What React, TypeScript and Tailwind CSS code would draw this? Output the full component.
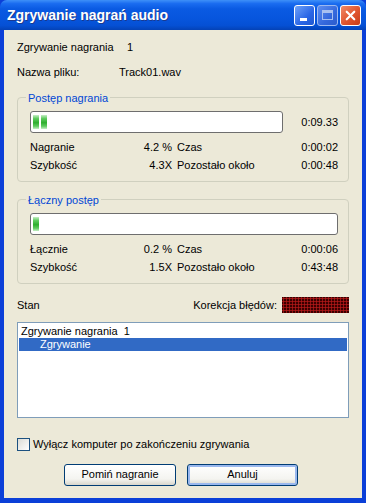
import { X } from "lucide-react";

const Chunk = () => (
  <div className="h-full w-[6px] bg-[linear-gradient(to_bottom,#c6eec6_0%,#5fcb5f_25%,#2eae2e_55%,#5fcb5f_80%,#c6eec6_100%)]" />
);

const Progress = ({ chunks, className }: { chunks: number; className: string }) => (
  <div
    className={`flex h-[22px] gap-[2px] rounded-[3px] border border-[#6e6e6e] bg-white px-[2px] py-[3px] ${className}`}
  >
    {Array.from({ length: chunks }).map((_, i) => (
      <Chunk key={i} />
    ))}
  </div>
);

const StatRow = ({ a, b, c, d }: { a: string; b: string; c: string; d: string }) => (
  <div className="flex h-[18px] items-center">
    <span className="w-[100px]">{a}</span>
    <span className="w-[42px] text-right">{b}</span>
    <span className="ml-[5px] flex-1">{c}</span>
    <span>{d}</span>
  </div>
);

const GroupBox = ({ title, children }: { title: string; children: React.ReactNode }) => (
  <div className="relative rounded-[4px] border border-[#d0d0bf] pb-[7px] pl-[12px] pr-[10px] pt-[13px]">
    <span className="absolute -top-[8px] left-[8px] bg-[#ece9d8] px-[2px] text-[#0046d5]">{title}</span>
    {children}
  </div>
);

export default function App() {
  return (
    <div className="flex h-[503px] w-[366px] flex-col bg-[#0b3fd8] font-['Liberation_Sans',Arial,sans-serif] text-[11px] text-black">
      {/* title bar */}
      <div className="flex h-[30px] shrink-0 items-center rounded-t-[7px] bg-[linear-gradient(to_bottom,#3e90f8_0%,#1a6cf0_12%,#0a5ae2_30%,#0756de_60%,#0550d4_85%,#0442b6_100%)] pl-[7px] pr-[5px]">
        <span className="flex-1 text-[14px] font-bold text-white [text-shadow:1px_1px_0_#1a3a90]">
          Zgrywanie nagrań audio
        </span>
        <div className="flex gap-[2px]">
          <div className="flex h-[21px] w-[21px] items-end justify-start rounded-[3px] border border-white bg-[linear-gradient(135deg,#6fa2f8,#2a66e6_60%,#2058d0)] pb-[4px] pl-[5px]">
            <div className="h-[3px] w-[7px] bg-white" />
          </div>
          <div className="flex h-[21px] w-[21px] items-center justify-center rounded-[3px] border border-[#9cb8f0] bg-[linear-gradient(135deg,#5e8ef0,#3568dc_60%,#2c5ccc)]">
            <div className="h-[10px] w-[11px] border border-t-[3px] border-[#a8c0f0]" />
          </div>
          <div className="flex h-[21px] w-[21px] items-center justify-center rounded-[3px] border border-white bg-[linear-gradient(135deg,#f08a68,#e0552e_55%,#c83c18)]">
            <X className="h-[15px] w-[15px] text-white" strokeWidth={3.5} />
          </div>
        </div>
      </div>

      {/* client */}
      <div className="mx-[4px] mb-[5px] flex flex-1 flex-col bg-[#ece9d8] px-[13px]">
        <div className="mt-[9px] flex h-[16px] items-center">
          <span className="w-[110px]">Zgrywanie nagrania</span>
          <span>1</span>
        </div>
        <div className="mt-[9px] flex h-[16px] items-center">
          <span className="w-[102px]">Nazwa pliku:</span>
          <span>Track01.wav</span>
        </div>

        <div className="mt-[17px]">
          <GroupBox title="Postęp nagrania">
            <div className="flex items-center">
              <Progress chunks={2} className="w-[253px]" />
              <span className="flex-1 text-right">0:09.33</span>
            </div>
            <div className="mt-[5px]">
              <StatRow a="Nagranie" b="4.2 %" c="Czas" d="0:00:02" />
              <StatRow a="Szybkość" b="4.3X" c="Pozostało około" d="0:00:48" />
            </div>
          </GroupBox>
        </div>

        <div className="mt-[17px]">
          <GroupBox title="Łączny postęp">
            <Progress chunks={1} className="w-full" />
            <div className="mt-[5px]">
              <StatRow a="Łącznie" b="0.2 %" c="Czas" d="0:00:06" />
              <StatRow a="Szybkość" b="1.5X" c="Pozostało około" d="0:43:48" />
            </div>
          </GroupBox>
        </div>

        <div className="mt-[13px] flex h-[16px] items-center">
          <span className="flex-1">Stan</span>
          <span className="mr-[5px]">Korekcja błędów:</span>
          <div className="h-[16px] w-[67px] bg-[#3a0000] bg-[radial-gradient(circle,#b01818_0.9px,transparent_1.3px)] bg-[length:3px_3px]" />
        </div>

        <div className="mt-[9px] h-[96px] border border-[#7f9db9] bg-white p-[1px] pt-[2px]">
          <div className="flex h-[13px] items-center pl-[2px]">Zgrywanie nagrania&nbsp;&nbsp;1</div>
          <div className="flex h-[13px] items-center bg-[#316ac5] pl-[21px] text-white">Zgrywanie</div>
        </div>

        <div className="mt-[18px] flex items-center">
          <div className="h-[13px] w-[13px] border border-[#1c5180] bg-[linear-gradient(135deg,#dcdcd6,#ffffff)]" />
          <span className="ml-[3px]">Wyłącz komputer po zakończeniu zgrywania</span>
        </div>

        <div className="mt-[11px] flex justify-center gap-[11px] pr-[4px]">
          <button className="h-[22px] w-[112px] rounded-[3px] border border-[#003c74] bg-[linear-gradient(to_bottom,#ffffff,#f4f4f0_70%,#d8d6cc)]">
            Pomiń nagranie
          </button>
          <button className="h-[22px] w-[111px] rounded-[3px] border border-[#003c74] bg-[linear-gradient(to_bottom,#ffffff,#f4f4f0_70%,#d8d6cc)] shadow-[inset_0_0_0_2px_#9ab8ee]">
            Anuluj
          </button>
        </div>
      </div>
    </div>
  );
}
